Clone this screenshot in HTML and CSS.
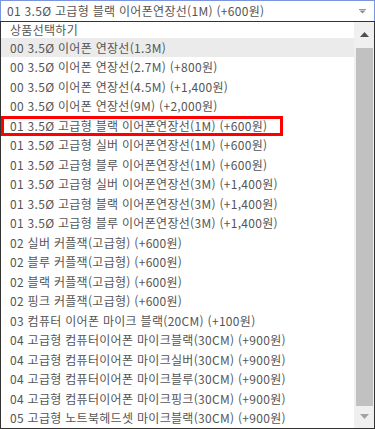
FILE: index.html
```html
<!DOCTYPE html>
<html lang="ko">
<head>
    <meta charset="UTF-8">
    <meta name="viewport" content="width=device-width, initial-scale=1.0">
    <title>상품선택</title>
    <link rel="stylesheet" href="styles.css">
</head>
<body>
    <div class="select">
        <span class="select-text">01 3.5Ø 고급형 블랙 이어폰연장선(1M) (+600원)</span>
        <svg class="select-arrow" width="7" height="5" viewBox="0 0 7 5">
            <path d="M0 0.5h7" stroke="#9a9a9a" stroke-width="1"/>
            <path d="M0.5 1.5h6l-3 3z" fill="#8a8a8a"/>
        </svg>
    </div>
    <div class="list">
        <div class="options">
            <div class="opt first">상품선택하기</div>
            <div class="opt hover">00 3.5Ø 이어폰 연장선(1.3M)</div>
            <div class="opt">00 3.5Ø 이어폰 연장선(2.7M) (+800원)</div>
            <div class="opt">00 3.5Ø 이어폰 연장선(4.5M) (+1,400원)</div>
            <div class="opt">00 3.5Ø 이어폰 연장선(9M) (+2,000원)</div>
            <div class="opt marked">01 3.5Ø 고급형 블랙 이어폰연장선(1M) (+600원)</div>
            <div class="opt">01 3.5Ø 고급형 실버 이어폰연장선(1M) (+600원)</div>
            <div class="opt">01 3.5Ø 고급형 블루 이어폰연장선(1M) (+600원)</div>
            <div class="opt">01 3.5Ø 고급형 실버 이어폰연장선(3M) (+1,400원)</div>
            <div class="opt">01 3.5Ø 고급형 블랙 이어폰연장선(3M) (+1,400원)</div>
            <div class="opt">01 3.5Ø 고급형 블루 이어폰연장선(3M) (+1,400원)</div>
            <div class="opt">02 실버 커플잭(고급형) (+600원)</div>
            <div class="opt">02 블루 커플잭(고급형) (+600원)</div>
            <div class="opt">02 블랙 커플잭(고급형) (+600원)</div>
            <div class="opt">02 핑크 커플잭(고급형) (+600원)</div>
            <div class="opt">03 컴퓨터 이어폰 마이크 블랙(20CM) (+100원)</div>
            <div class="opt">04 고급형 컴퓨터이어폰 마이크블랙(30CM) (+900원)</div>
            <div class="opt">04 고급형 컴퓨터이어폰 마이크실버(30CM) (+900원)</div>
            <div class="opt">04 고급형 컴퓨터이어폰 마이크블루(30CM) (+900원)</div>
            <div class="opt">04 고급형 컴퓨터이어폰 마이크핑크(30CM) (+900원)</div>
            <div class="opt">05 고급형 노트북헤드셋 마이크블랙(30CM) (+900원)</div>
        </div>
        <div class="scrollbar">
            <div class="sb-btn">
                <svg width="9" height="5" viewBox="0 0 9 5"><path d="M0 5h9L4.5 0z" fill="#505050"/></svg>
            </div>
            <div class="sb-track">
                <div class="sb-thumb"></div>
            </div>
            <div class="sb-btn down">
                <svg width="9" height="5" viewBox="0 0 9 5"><path d="M0 0h9L4.5 5z" fill="#a3a3a3"/></svg>
            </div>
        </div>
    </div>
</body>
</html>
```

FILE: styles.css
```css
body {
    margin: 0;
    font: 12px "Noto Sans CJK KR", "DejaVu Sans", sans-serif;
    letter-spacing: 0.3px;
    color: #555;
    background: #fff;
}
.select {
    display: flex;
    align-items: center;
    justify-content: space-between;
    height: 21px;
    padding: 0 8px 0 6px;
    border: 1px solid #7a95dd;
    border-bottom: none;
    box-sizing: border-box;
}
.select-text {
    line-height: 20px;
}
.select-arrow {
    display: block;
}
.list {
    display: flex;
    height: 408px;
    border: 1px solid #333;
    box-sizing: border-box;
}
.options {
    flex: 1;
    overflow: hidden;
}
.opt {
    position: relative;
    height: 19.5px;
    line-height: 19.5px;
    padding-left: 9px;
    white-space: nowrap;
}
.opt.first {
    height: 15.5px;
    line-height: 15.5px;
}
.opt.hover {
    background: #ebebeb;
}
.opt.marked::after {
    content: "";
    position: absolute;
    left: 0;
    top: 0.5px;
    width: 282px;
    height: 20px;
    border: 3px solid #f00;
    box-sizing: border-box;
}
.scrollbar {
    display: flex;
    flex-direction: column;
    width: 20px;
    background: #f0f0f0;
}
.sb-btn {
    display: flex;
    align-items: center;
    justify-content: center;
    height: 24px;
    padding-left: 1px;
}
.sb-btn.down {
    height: 20px;
    padding-bottom: 2px;
}
.sb-track {
    flex: 1;
    display: flex;
    padding: 2px 1px 0 2px;
}
.sb-thumb {
    flex: 1;
    background: #c1c1c1;
}
```
